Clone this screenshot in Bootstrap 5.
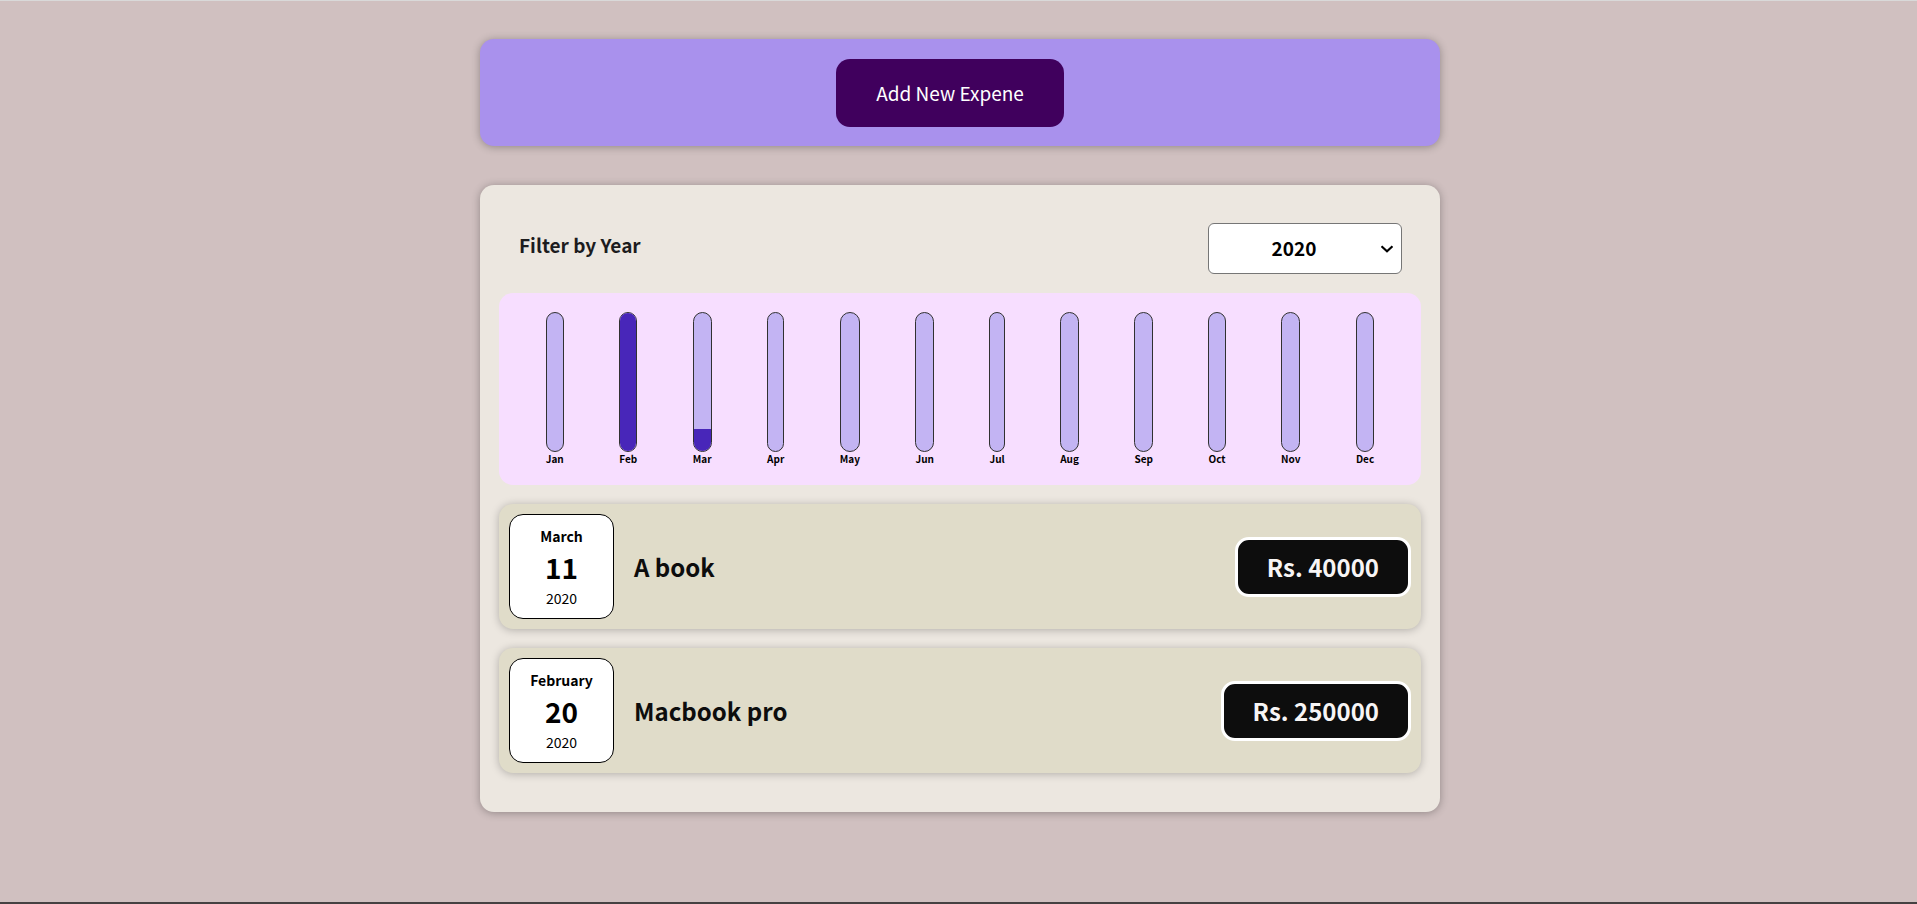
<!DOCTYPE html>
<html lang="en">
<head>
<meta charset="utf-8">
<meta name="viewport" content="width=device-width, initial-scale=1">
<title>Expenses</title>
<link href="https://cdn.jsdelivr.net/npm/bootstrap@5.3.0/dist/css/bootstrap.min.css" rel="stylesheet">
<style>
  body {
    font-family: "Noto Sans CJK JP", "Noto Sans", sans-serif;
    background: #d0c0c0;
    color: #0d0d0d;
    border-top: 1px solid #d9d9d9;
    border-bottom: 2px solid #454142;
  }
  .page { padding: 38px 0 38px 3px; gap: 39px; }
  .panel {
    width: 960px;
    max-width: 100%;
    border-radius: 14px;
    box-shadow: 0 1px 8px rgba(0, 0, 0, .3);
  }
  .panel-add { background: #a991ed; padding: 20px 20px 19px 0; }
  .btn-add {
    --bs-btn-color: #fff;
    --bs-btn-bg: #40005d;
    --bs-btn-hover-color: #fff;
    --bs-btn-hover-bg: #510674;
    --bs-btn-border-width: 0;
    --bs-btn-border-radius: 14px;
    --bs-btn-padding-x: 40px;
    --bs-btn-padding-y: 20px;
    --bs-btn-font-size: 19px;
    line-height: 28px;
  }
  .panel-list { background: #ece7e0; padding: 38px 19px 39px; }
  .filter { padding: 0 19px 0 20px; margin-bottom: 19px; }
  .filter-label { font-size: 19px; font-weight: 700; line-height: 28px; margin-bottom: 8px; color: #1c1c1e; }
  .filter-select {
    width: 194px;
    height: 51px;
    border: 1px solid #767676;
    border-radius: 6px;
    padding: 0 22px 0 0;
    text-align: center;
    text-align-last: center;
    font-size: 19px;
    font-weight: 700;
    color: #000;
    background: #fff url("data:image/svg+xml,%3Csvg xmlns='http://www.w3.org/2000/svg' viewBox='0 0 14 8'%3E%3Cpath d='M1.5 1.3L7 6.2l5.500-4.900' fill='none' stroke='%23000' stroke-width='2.200'/%3E%3C/svg%3E") no-repeat right 7px center / 14px 8px;
  }
  .chart { background: #f7deff; border-radius: 14px; padding: 19px 19px; height: 192px; margin-bottom: 19px; }
  .bar-track {
    height: 140px;
    border: 1px solid #313131;
    border-radius: 12px;
    background: #c3b4f3;
    overflow: hidden;
  }
  .bar-fill { background: #4826b9; }
  .bar-label { font-size: 10px; font-weight: 700; line-height: 14px; color: #000; }
  .expenses { gap: 19px; }
  .expense {
    background: #e0dcc9;
    border-radius: 14px;
    padding: 10px;
    box-shadow: 0 1px 8px rgba(0, 0, 0, .25);
  }
  .date-box {
    width: 105px;
    height: 105px;
    background: #fff;
    color: #000;
    border: 1px solid #000;
    border-radius: 14px;
  }
  .date-month, .date-year { font-size: 14px; line-height: 24px; }
  .date-month { font-weight: 700; }
  .date-day { font-size: 28px; font-weight: 700; line-height: 38px; }
  .expense-title { font-size: 24px; font-weight: 700; line-height: 36px; margin: 0 0 0 20px; }
  .price {
    background: #0d0d0d;
    color: #f7f5f5;
    border: 3px solid #fff;
    border-radius: 14px;
    padding: 9px 29px;
    font-size: 24px;
    font-weight: 700;
    line-height: 36px;
  }
</style>
</head>
<body class="min-vh-100">
<main class="page d-flex flex-column align-items-center">
  <section class="panel panel-add text-center d-flex justify-content-center">
    <button type="button" class="btn btn-add">Add New Expene</button>
  </section>

  <section class="panel panel-list">
    <div class="filter d-flex justify-content-between align-items-center">
      <label class="filter-label" for="year">Filter by Year</label>
      <select class="form-select filter-select" id="year">
        <option>2022</option>
        <option>2021</option>
        <option selected>2020</option>
        <option>2019</option>
      </select>
    </div>

    <div class="chart d-flex justify-content-around align-items-start">
      <div><div class="bar-track d-flex flex-column justify-content-end"><div class="bar-fill" style="height:0%"></div></div><div class="bar-label">Jan</div></div>
      <div><div class="bar-track d-flex flex-column justify-content-end"><div class="bar-fill" style="height:100%"></div></div><div class="bar-label">Feb</div></div>
      <div><div class="bar-track d-flex flex-column justify-content-end"><div class="bar-fill" style="height:16%"></div></div><div class="bar-label">Mar</div></div>
      <div><div class="bar-track d-flex flex-column justify-content-end"><div class="bar-fill" style="height:0%"></div></div><div class="bar-label">Apr</div></div>
      <div><div class="bar-track d-flex flex-column justify-content-end"><div class="bar-fill" style="height:0%"></div></div><div class="bar-label">May</div></div>
      <div><div class="bar-track d-flex flex-column justify-content-end"><div class="bar-fill" style="height:0%"></div></div><div class="bar-label">Jun</div></div>
      <div><div class="bar-track d-flex flex-column justify-content-end"><div class="bar-fill" style="height:0%"></div></div><div class="bar-label">Jul</div></div>
      <div><div class="bar-track d-flex flex-column justify-content-end"><div class="bar-fill" style="height:0%"></div></div><div class="bar-label">Aug</div></div>
      <div><div class="bar-track d-flex flex-column justify-content-end"><div class="bar-fill" style="height:0%"></div></div><div class="bar-label">Sep</div></div>
      <div><div class="bar-track d-flex flex-column justify-content-end"><div class="bar-fill" style="height:0%"></div></div><div class="bar-label">Oct</div></div>
      <div><div class="bar-track d-flex flex-column justify-content-end"><div class="bar-fill" style="height:0%"></div></div><div class="bar-label">Nov</div></div>
      <div><div class="bar-track d-flex flex-column justify-content-end"><div class="bar-fill" style="height:0%"></div></div><div class="bar-label">Dec</div></div>
    </div>

    <ul class="expenses list-unstyled d-flex flex-column mb-0">
      <li class="expense d-flex align-items-center">
        <div class="date-box d-flex flex-column align-items-center justify-content-center">
          <div class="date-month">March</div>
          <div class="date-day">11</div>
          <div class="date-year">2020</div>
        </div>
        <h2 class="expense-title">A book</h2>
        <div class="price ms-auto">Rs. 40000</div>
      </li>
      <li class="expense d-flex align-items-center">
        <div class="date-box d-flex flex-column align-items-center justify-content-center">
          <div class="date-month">February</div>
          <div class="date-day">20</div>
          <div class="date-year">2020</div>
        </div>
        <h2 class="expense-title">Macbook pro</h2>
        <div class="price ms-auto">Rs. 250000</div>
      </li>
    </ul>
  </section>
</main>
<script src="https://cdn.jsdelivr.net/npm/bootstrap@5.3.0/dist/js/bootstrap.bundle.min.js"></script>
</body>
</html>
